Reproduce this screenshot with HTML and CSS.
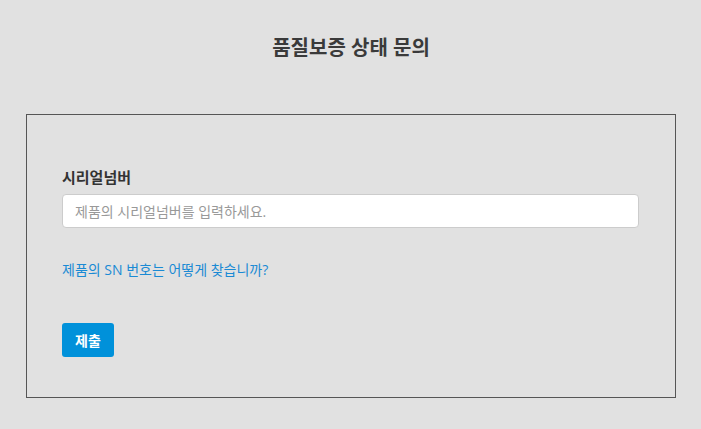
FILE: index.html
```html
<!DOCTYPE html>
<html lang="ko">
<head>
  <meta charset="UTF-8">
  <meta name="viewport" content="width=device-width, initial-scale=1.0">
  <title>품질보증 상태 문의</title>
  <link rel="stylesheet" href="styles.css">
</head>
<body>
  <section class="warranty-section">
    <h1 class="page-title">품질보증 상태 문의</h1>
    <form class="warranty-box" onsubmit="return false;">
      <label class="field-label" for="serial-input">시리얼넘버</label>
      <input type="text" id="serial-input" class="field-input" placeholder="제품의 시리얼넘버를 입력하세요.">
      <a class="help-link" href="#">제품의 SN 번호는 어떻게 찾습니까?</a>
      <div class="actions">
        <button type="submit" class="submit-btn">제출</button>
      </div>
    </form>
  </section>
</body>
</html>
```

FILE: styles.css
```css
* {
  margin: 0;
  padding: 0;
  box-sizing: border-box;
}
body {
  font-family: 'Open Sans', 'Noto Sans CJK KR', sans-serif;
  background: #e1e1e1;
  color: #333;
}
.warranty-section {
  padding: 34px 25px 0 26px;
}
.page-title {
  font-size: 20px;
  font-weight: 700;
  color: #3a3a3a;
  text-align: center;
  line-height: 28px;
  margin-bottom: 52px;
}
.warranty-box {
  border: 1px solid #555;
  padding: 50px 36px 40px 35px;
  display: flex;
  flex-direction: column;
  align-items: flex-start;
}
.field-label {
  font-size: 15px;
  font-weight: 700;
  color: #333;
  line-height: 24px;
  margin-bottom: 5px;
}
.field-input {
  width: 100%;
  height: 34px;
  border: 1px solid #ccc;
  border-radius: 4px;
  background: #fff;
  padding: 0 12px;
  font-family: inherit;
  font-size: 14px;
  color: #333;
}
.field-input::placeholder {
  color: #999;
}
.help-link {
  margin-top: 32px;
  font-size: 14px;
  color: #1a8ad4;
  text-decoration: none;
  line-height: 20px;
}
.actions {
  margin-top: 43px;
}
.submit-btn {
  background: #0091da;
  color: #fff;
  border: none;
  border-radius: 3px;
  font-family: inherit;
  font-size: 14px;
  font-weight: 700;
  height: 34px;
  padding: 0 13px;
  cursor: pointer;
}
```
